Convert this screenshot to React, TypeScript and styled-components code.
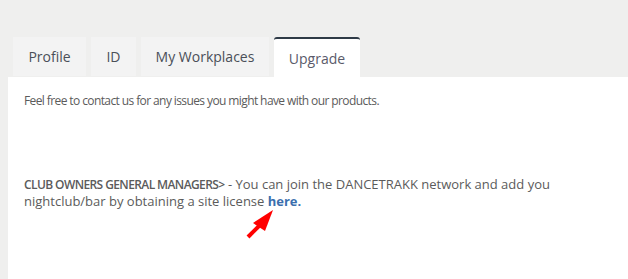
import React from "react";
import styled, { createGlobalStyle } from "styled-components";

const Global = createGlobalStyle`
  html, body { margin: 0; padding: 0; }
  body {
    background: #efefee;
    font-family: "Open Sans", "Liberation Sans", sans-serif;
    overflow: hidden;
  }
`;

const Page = styled.div`
  padding: 37px 0 0 8px;
  width: 628px;
  height: 279px;
  box-sizing: border-box;
  overflow: hidden;
`;

const TabBar = styled.div`
  display: flex;
  gap: 5px;
  padding-left: 5px;
  height: 40px;
`;

const Tab = styled.div<{ $active?: boolean; $w: number }>`
  width: ${(p) => p.$w}px;
  box-sizing: border-box;
  display: flex;
  align-items: center;
  justify-content: center;
  font-size: 14px;
  color: ${(p) => (p.$active ? "#5a5a6a" : "#4a4f58")};
  background: ${(p) => (p.$active ? "#ffffff" : "#f3f3f3")};
  border-top: ${(p) => (p.$active ? "2px solid #2e3a46" : "none")};
  border-radius: ${(p) => (p.$active ? "3px 3px 0 0" : "0")};
  padding-bottom: ${(p) => (p.$active ? "1px" : "0")};
  height: ${(p) => (p.$active ? "41px" : "39px")};
`;

const Panel = styled.div`
  position: relative;
  background: #ffffff;
  padding: 15px 16px 0 16px;
  height: 220px;
  color: #5b5b5b;
  font-size: 13px;
  line-height: 17px;
`;

const Para = styled.p<{ $gap?: number; $tight?: boolean }>`
  margin: 0;
  margin-top: ${(p) => p.$gap ?? 0}px;
  width: 575px;
  font-size: ${(p) => (p.$tight ? "12px" : "13px")};
  letter-spacing: ${(p) => (p.$tight ? "-0.6px" : "normal")};
`;

const Strong = styled.span`
  font-weight: 600;
  font-size: 12px;
  letter-spacing: -0.6px;
`;

const Link = styled.a`
  font-weight: 700;
  color: #3b6fae;
  text-decoration: none;
`;

const Arrow = styled.svg`
  position: absolute;
  left: 236px;
  top: 129px;
`;

export default function App() {
  return (
    <>
      <Global />
      <Page>
        <TabBar>
          <Tab $w={73}>Profile</Tab>
          <Tab $w={45}>ID</Tab>
          <Tab $w={128}>My Workplaces</Tab>
          <Tab $w={86} $active>Upgrade</Tab>
        </TabBar>
        <Panel>
          <Para $tight>Feel free to contact us for any issues you might have with our products.</Para>
          <Para $gap={67}>
            <Strong>CLUB OWNERS GENERAL MANAGERS&gt;</Strong> - You can join the DANCETRAKK network and add you
            nightclub/bar by obtaining a site license <Link href="#">here.</Link>
          </Para>
          <Arrow width="40" height="40" viewBox="0 0 40 40">
            <line x1="4" y1="31" x2="16" y2="19" stroke="#ff0000" strokeWidth="4" />
            <polygon points="29,4 9,17 21,25" fill="#ff0000" />
          </Arrow>
        </Panel>
      </Page>
    </>
  );
}
